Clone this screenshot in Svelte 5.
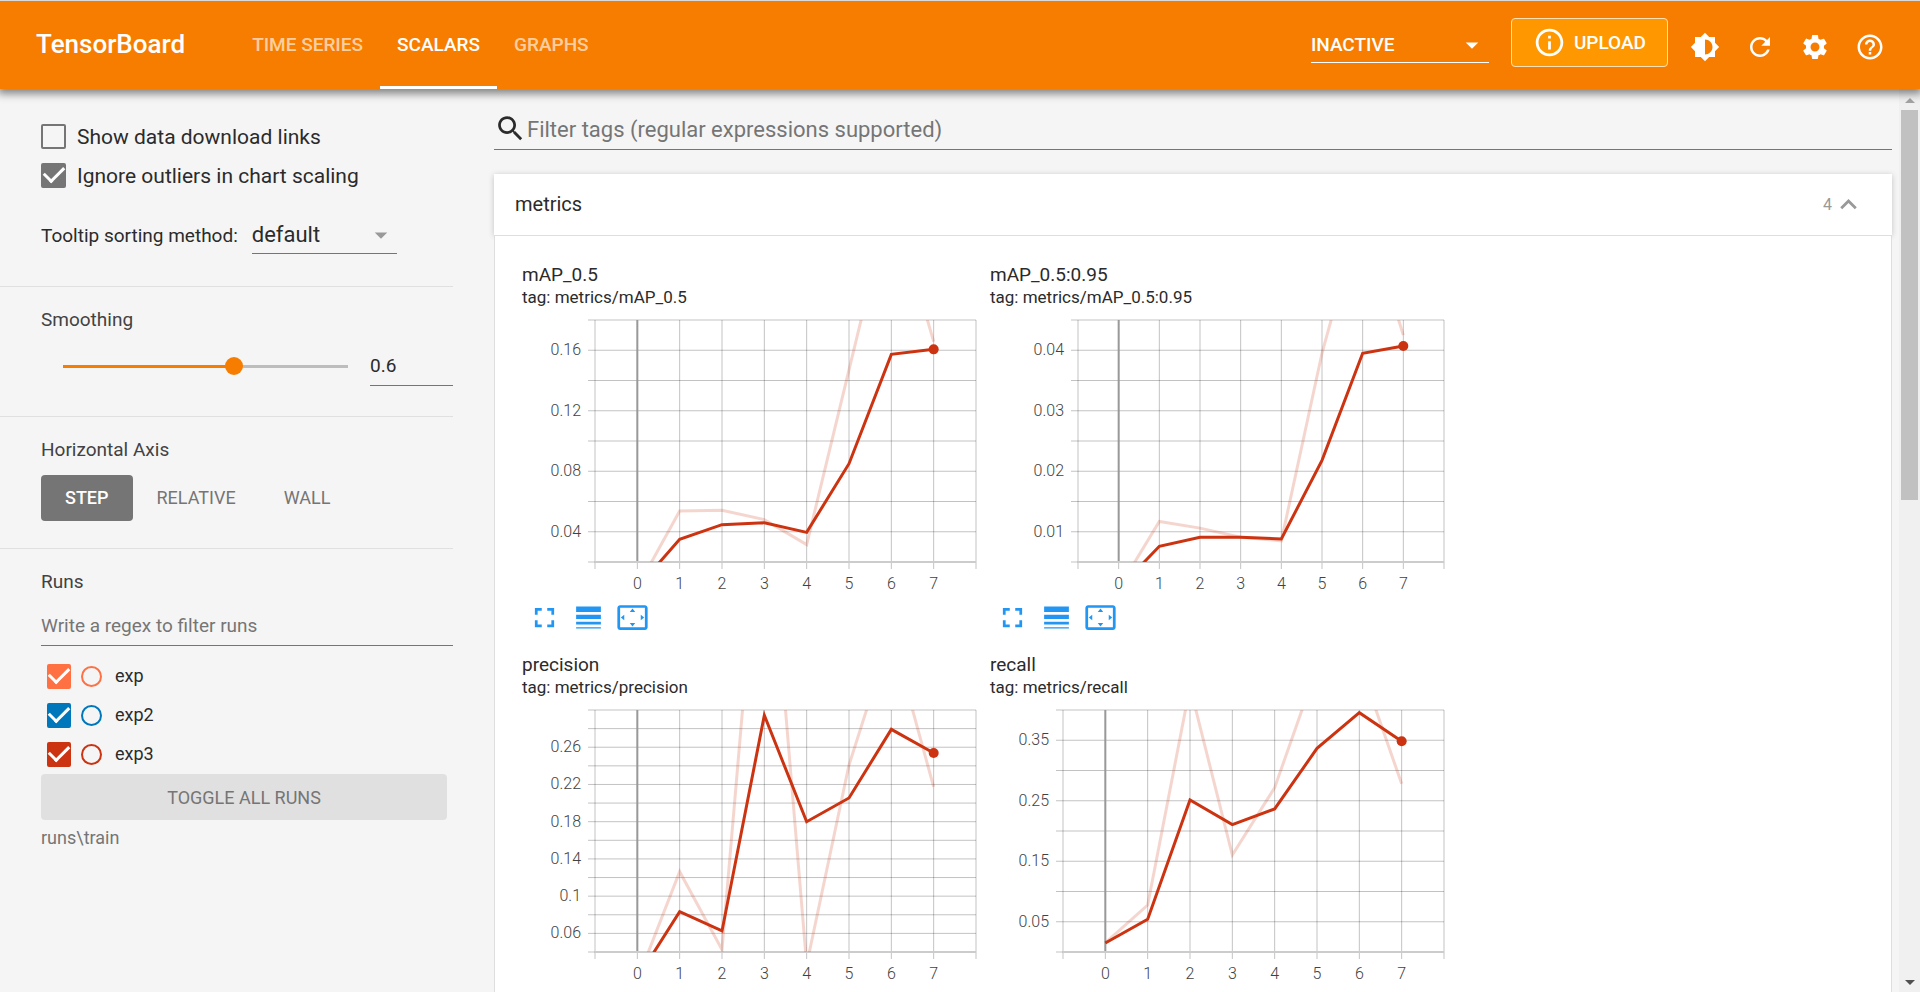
<script>
  const tabs = ['Time Series', 'Scalars', 'Graphs'];
  let activeTab = $state('Scalars');

  const axes = ['Step', 'Relative', 'Wall'];
  let activeAxis = $state('Step');

  let smoothing = $state(0.6);
  let showDownload = $state(false);
  let ignoreOutliers = $state(true);
  let expanded = $state(true);

  let runs = $state([
    { name: 'exp', color: '#ff7043', checked: true },
    { name: 'exp2', color: '#0077bb', checked: true },
    { name: 'exp3', color: '#cc3311', checked: true },
  ]);

  const icons = {
    info: 'M11 17h2v-6h-2v6zm1-15C6.48 2 2 6.48 2 12s4.48 10 10 10 10-4.48 10-10S17.52 2 12 2zm0 18c-4.41 0-8-3.59-8-8s3.59-8 8-8 8 3.59 8 8-3.59 8-8 8zM11 9h2V7h-2v2z',
    brightness: 'M20 15.31L23.31 12 20 8.69V4h-4.69L12 .69 8.69 4H4v4.69L.69 12 4 15.31V20h4.69L12 23.31 15.31 20H20v-4.69zM12 18V6c3.31 0 6 2.69 6 6s-2.69 6-6 6z',
    refresh: 'M17.65 6.35C16.2 4.9 14.21 4 12 4c-4.42 0-7.99 3.58-7.99 8s3.57 8 7.99 8c3.73 0 6.84-2.55 7.73-6h-2.08c-.82 2.33-3.04 4-5.65 4-3.31 0-6-2.69-6-6s2.69-6 6-6c1.66 0 3.14.69 4.22 1.78L13 11h7V4l-2.35 2.35z',
    settings: 'M19.14 12.94c.04-.3.06-.61.06-.94 0-.32-.02-.64-.07-.94l2.03-1.58c.18-.14.23-.41.12-.61l-1.92-3.32c-.12-.22-.37-.29-.59-.22l-2.39.96c-.5-.38-1.03-.7-1.62-.94l-.36-2.54c-.04-.24-.24-.41-.48-.41h-3.84c-.24 0-.43.17-.47.41l-.36 2.54c-.59.24-1.13.57-1.62.94l-2.39-.96c-.22-.08-.47 0-.59.22L2.74 8.87c-.12.21-.08.47.12.61l2.03 1.58c-.05.3-.09.63-.09.94s.02.64.07.94l-2.03 1.58c-.18.14-.23.41-.12.61l1.92 3.32c.12.22.37.29.59.22l2.39-.96c.5.38 1.03.7 1.62.94l.36 2.54c.05.24.24.41.48.41h3.84c.24 0 .44-.17.47-.41l.36-2.54c.59-.24 1.13-.56 1.62-.94l2.39.96c.22.08.47 0 .59-.22l1.92-3.32c.12-.22.07-.47-.12-.61l-2.01-1.58zM12 15.6c-1.98 0-3.6-1.62-3.6-3.6s1.62-3.6 3.6-3.6 3.6 1.62 3.6 3.6-1.62 3.6-3.6 3.6z',
    help: 'M11 18h2v-2h-2v2zm1-16C6.48 2 2 6.48 2 12s4.48 10 10 10 10-4.48 10-10S17.52 2 12 2zm0 18c-4.41 0-8-3.59-8-8s3.59-8 8-8 8 3.59 8 8-3.59 8-8 8zm0-14c-2.21 0-4 1.79-4 4h2c0-1.1.9-2 2-2s2 .9 2 2c0 2-3 1.75-3 5h2c0-2.25 3-2.5 3-5 0-2.21-1.79-4-4-4z',
    search: 'M15.5 14h-.79l-.28-.27C15.41 12.59 16 11.11 16 9.5 16 5.91 13.09 3 9.5 3S3 5.91 3 9.5 5.91 16 9.5 16c1.61 0 3.09-.59 4.23-1.57l.27.28v.79l5 4.99L20.49 19l-4.99-5zm-6 0C7.01 14 5 11.99 5 9.5S7.01 5 9.5 5 14 7.01 14 9.5 11.99 14 9.5 14z',
    expandLess: 'M12 8l-6 6 1.41 1.41L12 10.83l4.59 4.58L18 14z',
    fullscreen: 'M7 14H5v5h5v-2H7v-3zm-2-4h2V7h3V5H5v5zm12 7h-3v2h5v-5h-2v3zM14 5v2h3v3h2V5h-5z',
    lineWeight: 'M3 17h18v-2H3v2zm0 3h18v-1H3v1zm0-7h18v-3H3v3zm0-9v4h18V4H3z',
    overscan: 'M12.01 5.5L10 8h4l-1.99-2.5zM18 10v4l2.5-1.99L18 10zM6 10l-2.5 2.01L6 14v-4zm8 6h-4l2.01 2.5L14 16zm7-13H3c-1.1 0-2 .9-2 2v14c0 1.1.9 2 2 2h18c1.1 0 2-.9 2-2V5c0-1.1-.9-2-2-2zm0 16.01H3V4.99h18v14.02z',
    dropDown: 'M7 10l5 5 5-5z',
  };

  const toolbar = [
    ['brightness', 'Toggle dark mode'],
    ['refresh', 'Reload'],
    ['settings', 'Settings'],
    ['help', 'Help'],
  ];

  const chartActions = [
    ['fullscreen', 'Toggle card size'],
    ['lineWeight', 'Toggle Y-axis log scale'],
    ['overscan', 'Fit domain to data'],
  ];

  // left = room taken by the y axis, step = distance between grid lines
  const charts = [
    {
      title: 'mAP_0.5', left: 73, min: 0.02, max: 0.18, step: 0.02,
      labels: [0.04, 0.08, 0.12, 0.16],
      raw: [0.003, 0.0537, 0.0542, 0.048, 0.0315, 0.147, 0.2625, 0.1657],
      smooth: [0.003, 0.035, 0.0447, 0.046, 0.0396, 0.085, 0.1573, 0.1606],
    },
    {
      title: 'mAP_0.5:0.95', left: 88, min: 0.005, max: 0.045, step: 0.005,
      labels: [0.01, 0.02, 0.03, 0.04],
      raw: [0.0006, 0.0117, 0.0106, 0.0091, 0.0085, 0.0395, 0.064, 0.0425],
      smooth: [0.0006, 0.0076, 0.0091, 0.0091, 0.0088, 0.0218, 0.0395, 0.0407],
    },
    {
      title: 'precision', left: 73, min: 0.04, max: 0.3, step: 0.02,
      labels: [0.06, 0.1, 0.14, 0.18, 0.22, 0.26],
      raw: [0.0096, 0.1263, 0.0425, 0.574, 0.0264, 0.2409, 0.3834, 0.2173],
      smooth: [0.0117, 0.0833, 0.0626, 0.2943, 0.18, 0.2055, 0.2792, 0.2538],
    },
    {
      title: 'recall', left: 73, min: 0, max: 0.4, step: 0.05,
      labels: [0.05, 0.15, 0.25, 0.35],
      raw: [0.0149, 0.0777, 0.4386, 0.1603, 0.2716, 0.4705, 0.4788, 0.278],
      smooth: [0.0149, 0.054, 0.2512, 0.2105, 0.2364, 0.3366, 0.3956, 0.3482],
    },
  ];

  const width = 454;
  const plotHeight = 242;
  const steps = [0, 1, 2, 3, 4, 5, 6, 7];

  // x domain is -1..8
  const px = (c, v) => c.left + ((v + 1) / 9) * (width - c.left);
  const py = (c, v) => ((c.max - v) / (c.max - c.min)) * plotHeight;
  const points = (c, values) => values.map((v, i) => `${px(c, i)},${py(c, v)}`).join(' ');
  const rows = (c) =>
    Array.from({ length: Math.round((c.max - c.min) / c.step) + 1 }, (_, i) => c.min + i * c.step);

  function toggleAll() {
    const next = !runs.every((r) => r.checked);
    runs.forEach((r) => (r.checked = next));
  }
</script>

{#snippet icon(name)}
  <svg class="icon" viewBox="0 0 24 24" aria-hidden="true"><path d={icons[name]} /></svg>
{/snippet}

<div class="page">
  <header>
    <h1>TensorBoard</h1>
    <nav>
      {#each tabs as tab}
        <button class="tab" class:active={tab === activeTab} onclick={() => (activeTab = tab)}>{tab}</button>
      {/each}
    </nav>
    <div class="select inactive">
      <select aria-label="Inactive dashboards">
        <option>INACTIVE</option>
      </select>
      {@render icon('dropDown')}
    </div>
    <button class="upload">{@render icon('info')}Upload</button>
    <div class="tools">
      {#each toolbar as [name, label]}
        <button class="tool" aria-label={label}>{@render icon(name)}</button>
      {/each}
    </div>
  </header>

  <div class="body">
    <aside>
      <section class="options">
        <label class="option"><input type="checkbox" class="check" bind:checked={showDownload} />Show data download links</label>
        <label class="option"><input type="checkbox" class="check" bind:checked={ignoreOutliers} />Ignore outliers in chart scaling</label>
        <div class="tooltip-row">
          <label for="sorting">Tooltip sorting method:</label>
          <div class="select sorting">
            <select id="sorting">
              <option>default</option>
              <option>descending</option>
              <option>ascending</option>
              <option>nearest</option>
            </select>
            {@render icon('dropDown')}
          </div>
        </div>
      </section>

      <section class="smoothing">
        <label class="heading" for="smoothing">Smoothing</label>
        <div class="slider-row">
          <input id="smoothing" type="range" min="0" max="1" step="0.001" bind:value={smoothing} style="--fill: {smoothing * 100}%" />
          <input class="number" type="text" aria-label="Smoothing value" bind:value={smoothing} />
        </div>
      </section>

      <section class="axis">
        <div class="heading">Horizontal Axis</div>
        <div class="axis-buttons">
          {#each axes as axis}
            <button class:active={axis === activeAxis} onclick={() => (activeAxis = axis)}>{axis}</button>
          {/each}
        </div>
      </section>

      <section class="runs">
        <label class="heading" for="run-filter">Runs</label>
        <input id="run-filter" class="run-filter" type="text" placeholder="Write a regex to filter runs" />
        <ul>
          {#each runs as run, i}
            <li style="--run: {run.color}">
              <input id="run-{i}" type="checkbox" class="check" bind:checked={run.checked} />
              <input type="radio" name="only" aria-label="Show only {run.name}" />
              <label for="run-{i}">{run.name}</label>
            </li>
          {/each}
        </ul>
        <button class="toggle-all" onclick={toggleAll}>Toggle all runs</button>
        <div class="logdir">runs\train</div>
      </section>
    </aside>

    <main>
      <label class="tag-filter">
        {@render icon('search')}
        <input type="text" aria-label="Filter tags" placeholder="Filter tags (regular expressions supported)" />
      </label>

      <button class="group-header" aria-expanded={expanded} onclick={() => (expanded = !expanded)}>
        <span class="group-name">metrics</span>
        <span class="count">{charts.length}</span>
        {@render icon('expandLess')}
      </button>

      {#if expanded}
        <div class="group">
          {#each charts as chart, i}
            <article>
              <h2>{chart.title}</h2>
              <p>tag: metrics/{chart.title}</p>
              <svg class="chart" viewBox="0 0 {width} 275" role="img" aria-label={chart.title}>
                <clipPath id="plot-{i}">
                  <rect x={chart.left} y="0" width={width - chart.left} height={plotHeight} />
                </clipPath>
                {#each rows(chart) as v}
                  <line class="grid" x1={chart.left - 7} x2={width} y1={py(chart, v)} y2={py(chart, v)} />
                {/each}
                {#each [-1, ...steps, 8] as s}
                  <line class="grid" x1={px(chart, s)} x2={px(chart, s)} y1="0" y2={plotHeight + 7} />
                {/each}
                <line class="zero" x1={px(chart, 0)} x2={px(chart, 0)} y1="0" y2={plotHeight} />
                <line class="base" x1={chart.left} x2={width} y1={plotHeight} y2={plotHeight} />
                {#each chart.labels as v}
                  <text x={chart.left - 14} y={py(chart, v) + 5} text-anchor="end">{v}</text>
                {/each}
                {#each steps as s}
                  <text x={px(chart, s)} y={plotHeight + 27} text-anchor="middle">{s}</text>
                {/each}
                <g clip-path="url(#plot-{i})">
                  <polyline class="raw" points={points(chart, chart.raw)} />
                  <polyline class="smooth" points={points(chart, chart.smooth)} />
                </g>
                <circle cx={px(chart, 7)} cy={py(chart, chart.smooth[7])} r="5" />
              </svg>
              <div class="actions">
                {#each chartActions as [name, label]}
                  <button aria-label={label}>{@render icon(name)}</button>
                {/each}
              </div>
            </article>
          {/each}
        </div>
      {/if}
    </main>

    <div class="scrollbar" aria-hidden="true">
      <span class="arrow up"></span>
      <span class="thumb"></span>
      <span class="arrow down"></span>
    </div>
  </div>
</div>

<style>
  :global(body) {
    background: #f5f5f5;
  }

  .page {
    height: 100vh;
    display: flex;
    flex-direction: column;
    overflow: hidden;
    box-sizing: border-box;
    border-top: 1px solid #dadada;
    font-family: Roboto, sans-serif;
    font-size: 19px;
    color: #2b2b2b;
  }

  .page :global(*) {
    box-sizing: border-box;
  }

  button,
  input,
  select {
    margin: 0;
    padding: 0;
    border: 0;
    border-radius: 0;
    background: none;
    font: inherit;
    color: inherit;
    outline: none;
  }

  button {
    cursor: pointer;
    text-transform: uppercase;
  }

  .icon {
    display: block;
    flex: none;
    width: 30px;
    height: 30px;
    fill: currentColor;
  }

  /* header */
  header {
    flex: none;
    position: relative;
    z-index: 1;
    display: flex;
    align-items: center;
    height: 88px;
    padding: 0 35px 0 36px;
    background: #f77d00;
    color: #fff;
    box-shadow: 0 3px 8px 2px rgba(0, 0, 0, 0.45);
  }

  h1 {
    margin: 0 50px 0 0;
    padding-bottom: 2px;
    font-size: 26px;
    font-weight: 500;
  }

  nav {
    display: flex;
    align-self: stretch;
    margin-right: auto;
  }

  .tab {
    padding: 2px 17px 0;
    border-bottom: 3px solid transparent;
    font-weight: 500;
    color: rgba(255, 255, 255, 0.65);
  }

  .tab.active {
    border-color: #fff;
    color: #fff;
  }

  .select {
    display: flex;
    align-items: center;
    border-bottom: 1px solid #757575;
  }

  .select select {
    flex: 1;
    appearance: none;
  }

  .select .icon {
    margin-left: -30px;
    pointer-events: none;
  }

  .inactive {
    width: 178px;
    height: 36px;
    margin-right: 22px;
    padding-right: 2px;
    border-color: #fff;
    font-weight: 500;
  }

  .upload {
    display: flex;
    align-items: center;
    gap: 8px;
    height: 49px;
    margin: 0 22px 6px 0;
    padding: 0 21px;
    border: 1px solid #ffe0b2;
    border-radius: 4px;
    background: #ff9800;
    font-weight: 500;
  }

  .upload .icon {
    width: 33px;
    height: 33px;
  }

  .tools {
    display: flex;
    gap: 25px;
    padding-top: 3px;
  }

  .body {
    flex: 1;
    min-height: 0;
    display: flex;
  }

  /* sidebar */
  aside {
    flex: none;
    width: 453px;
    padding-top: 4px;
  }

  section {
    padding: 21px 0 0 41px;
    border-bottom: 1px solid #e0e0e0;
  }

  .heading {
    display: block;
    line-height: 24px;
    color: #424242;
  }

  .options {
    height: 194px;
    padding-top: 24px;
  }

  .option {
    display: flex;
    align-items: center;
    gap: 11px;
    height: 39px;
    font-size: 21px;
  }

  .check {
    flex: none;
    display: grid;
    place-content: center;
    appearance: none;
    width: 25px;
    height: 25px;
    border: 2px solid #757575;
    border-radius: 2px;
  }

  .check:checked {
    border-color: var(--run, #757575);
    background: var(--run, #757575);
  }

  .check:checked::after {
    content: '';
    width: 9px;
    height: 17px;
    margin-bottom: 8px;
    border: solid #fff;
    border-width: 0 3px 3px 0;
    transform: rotate(45deg);
  }

  .tooltip-row {
    display: flex;
    align-items: center;
    gap: 14px;
    margin-top: 21px;
  }

  .sorting {
    width: 145px;
    height: 38px;
    padding-right: 1px;
    font-size: 22px;
  }

  .sorting .icon {
    color: #999;
  }

  .smoothing {
    height: 130px;
  }

  .slider-row {
    display: flex;
    align-items: center;
    gap: 13px;
    margin-top: 14px;
    padding-left: 13px;
  }

  /* the track is inset by the thumb's radius on both sides */
  input[type='range'] {
    appearance: none;
    flex: 1;
    min-width: 0;
    height: 18px;
    background: linear-gradient(to right, #f77d00 var(--fill), #bdbdbd var(--fill)) center / calc(100% - 18px) 3px no-repeat;
  }

  input[type='range']::-webkit-slider-thumb {
    appearance: none;
    width: 18px;
    height: 18px;
    border-radius: 50%;
    background: #f77d00;
  }

  .number {
    width: 83px;
    height: 40px;
    border-bottom: 1px solid #757575;
  }

  .axis {
    height: 132px;
  }

  .axis-buttons {
    display: flex;
    margin-top: 13px;
    font-size: 18px;
  }

  .axis-buttons button {
    height: 46px;
    padding: 0 24px 1px;
    border-radius: 4px;
    color: #757575;
  }

  .axis-buttons .active {
    background: #757575;
    color: #fff;
    font-weight: 500;
  }

  .runs {
    border: 0;
  }

  .run-filter {
    display: block;
    width: 100%;
    height: 40px;
    margin-top: 12px;
    border-bottom: 1px solid #757575;
  }

  ::placeholder {
    color: #757575;
    opacity: 1;
  }

  ul {
    margin: 0;
    padding: 11px 6px 0;
    list-style: none;
    font-size: 18px;
  }

  li {
    display: flex;
    align-items: center;
    height: 39px;
  }

  li .check {
    width: 24px;
  }

  li input[type='radio'] {
    appearance: none;
    width: 21px;
    height: 21px;
    margin: 0 13px 0 10px;
    border: 2px solid var(--run);
    border-radius: 50%;
  }

  li label {
    padding-bottom: 2px;
  }

  .toggle-all {
    display: block;
    width: calc(100% - 6px);
    height: 46px;
    border-radius: 4px;
    background: #e0e0e0;
    font-size: 18px;
    color: #757575;
  }

  .logdir {
    line-height: 36px;
    font-size: 18px;
    color: #757575;
  }

  /* charts */
  main {
    flex: 1;
    min-width: 0;
    overflow: hidden;
    padding: 19px 7px 0 41px;
  }

  .tag-filter {
    display: flex;
    align-items: center;
    height: 42px;
    margin-bottom: 24px;
    border-bottom: 1px solid #757575;
  }

  .tag-filter .icon {
    width: 33px;
    height: 33px;
  }

  .tag-filter input {
    flex: 1;
    padding-top: 2px;
    font-size: 22px;
  }

  .group-header {
    display: flex;
    align-items: center;
    width: 100%;
    height: 61px;
    padding: 0 27px 0 21px;
    background: #fff;
    box-shadow: 0 1px 6px rgba(0, 0, 0, 0.2);
    text-transform: none;
  }

  .group-name {
    margin-right: auto;
    padding-bottom: 2px;
    font-size: 20px;
  }

  .count {
    font-size: 16px;
    color: #999;
  }

  .group-header .icon {
    width: 33px;
    height: 33px;
    color: #999;
  }

  .group {
    position: relative;
    display: grid;
    grid-template-columns: repeat(auto-fill, 454px);
    gap: 15px 14px;
    padding: 28px 27px;
    border: 1px solid #dedede;
    background: #fff;
  }

  h2,
  p {
    margin: 0;
    font-weight: 400;
    line-height: 22px;
  }

  h2 {
    font-size: 19px;
  }

  p {
    margin-bottom: 12px;
    font-size: 17px;
  }

  .chart {
    display: block;
    width: 100%;
    overflow: visible;
  }

  .grid {
    stroke: #000;
    stroke-opacity: 0.24;
  }

  .zero {
    stroke: #999;
    stroke-width: 2;
  }

  .base {
    stroke: #ccc;
    stroke-width: 2;
  }

  .chart text {
    font-size: 16px;
    font-weight: 300;
    fill: #424242;
  }

  polyline {
    fill: none;
    stroke: #cc3311;
    stroke-width: 3;
  }

  .raw {
    stroke-opacity: 0.2;
  }

  circle {
    fill: #cc3311;
  }

  .actions {
    display: flex;
  }

  .actions button {
    display: grid;
    place-items: center;
    width: 44px;
    height: 44px;
    color: #2196f3;
  }

  .actions .icon {
    width: 33px;
    height: 33px;
  }

  /* scrollbar */
  .scrollbar {
    flex: none;
    display: flex;
    flex-direction: column;
    align-items: center;
    width: 21px;
    padding: 9px 0 7px;
    background: #f0f0f0;
  }

  .arrow {
    border: 5px solid transparent;
  }

  .up {
    border-top-width: 0;
    border-bottom-color: #a3a3a3;
  }

  .down {
    margin-top: auto;
    border-bottom-width: 0;
    border-top-color: #505050;
  }

  .thumb {
    width: 17px;
    height: 44%;
    margin-top: 7px;
    background: #c1c1c1;
  }
</style>
